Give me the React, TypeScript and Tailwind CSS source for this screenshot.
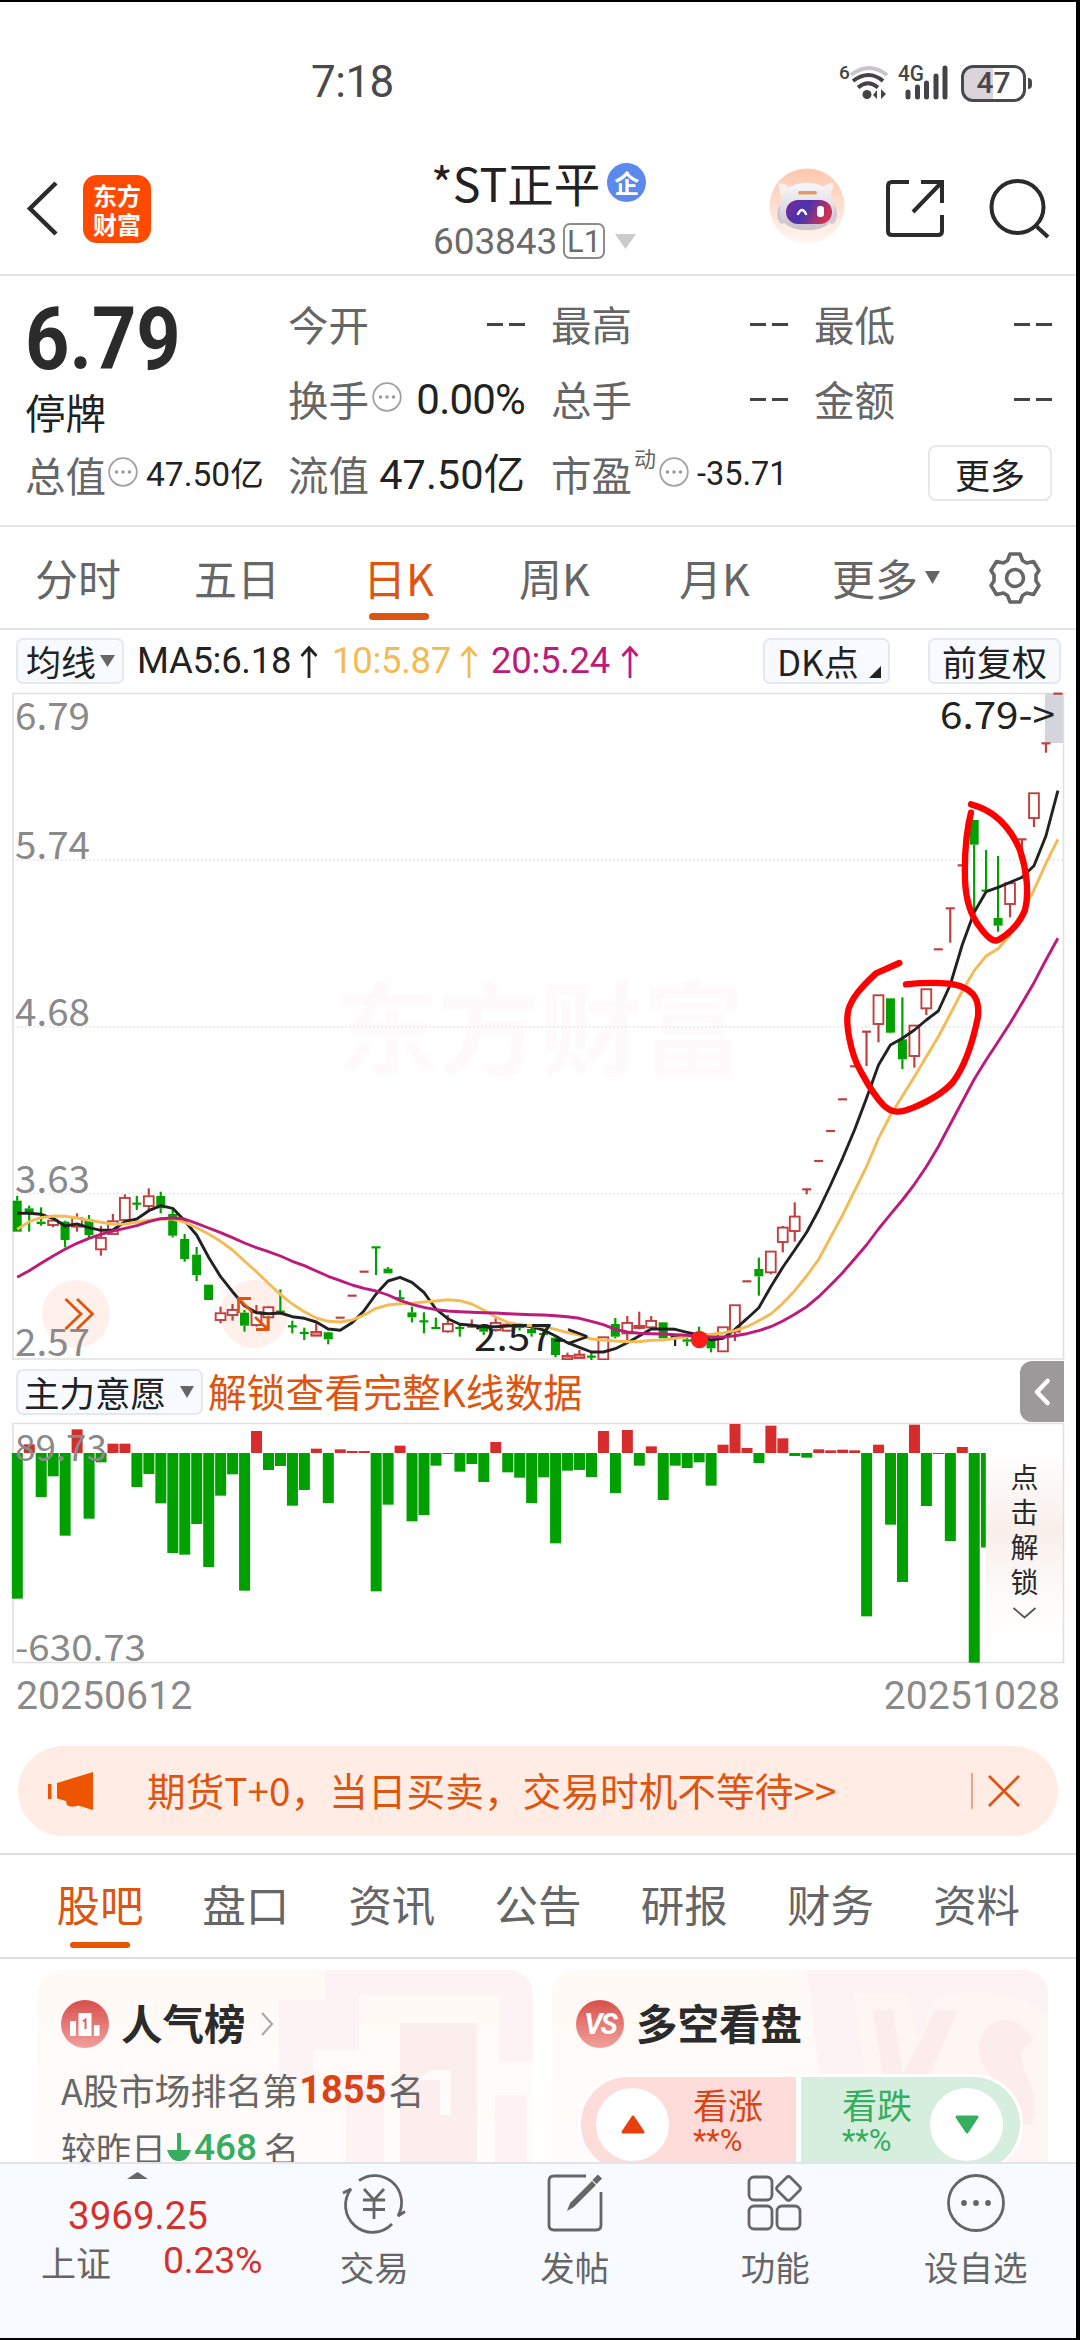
import React from "react";

const NUM = "font-['Roboto','Noto_Sans_CJK_SC',sans-serif]";

/* ---------- chart data: prices are stored in thirds of a pixel ---------- */

const cx = (i: number) => 17.2 + 11.962 * i;

type Kind = "r" | "g" | "k";
// [kind, high, bodyTop, bodyBottom, low]
type Candle = [Kind, number, number, number, number];

const shift = (list: Candle[], d: number): Candle[] =>
  list.map(([k, a, b, c, e]) => [k, a + d, b + d, c + d, e + d]);

const early: Candle[] = [
  ["g", 108, 122, 215, 215], ["g", 137, 145, 158, 215], ["g", 142, 185, 192, 197], ["r", 170, 180, 195, 202],
  ["g", 182, 185, 240, 262], ["r", 160, 172, 200, 215], ["g", 165, 178, 225, 235], ["r", 198, 232, 268, 287],
  ["r", 162, 182, 222, 222], ["r", 103, 112, 180, 180], ["g", 108, 131, 131, 150], ["r", 85, 107, 138, 150],
  ["g", 95, 108, 145, 160], ["g", 150, 162, 227, 232], ["g", 222, 237, 297, 305], ["g", 261, 284, 345, 363],
  ["g", 374, 374, 420, 420], ["r", 440, 458, 480, 490], ["r", 432, 448, 465, 482], ["g", 450, 458, 497, 515],
  ["r", 435, 455, 495, 500], ["r", 438, 440, 472, 510], ["g", 388, 455, 455, 460], ["g", 482, 499, 499, 520],
  ["g", 503, 519, 519, 540], ["r", 490, 514, 527, 528], ["g", 515, 517, 538, 553], ["r", 473, 473, 473, 473],
  ["r", 407, 407, 407, 407], ["r", 335, 335, 335, 335], ["g", 262, 262, 262, 345], ["g", 321, 326, 340, 340],
  ["g", 390, 415, 415, 420], ["g", 440, 457, 472, 487], ["g", 457, 484, 484, 520], ["g", 473, 504, 504, 506],
  ["r", 465, 490, 514, 518], ["g", 492, 504, 504, 530], ["r", 478, 500, 500, 503], ["g", 498, 500, 515, 525],
  ["r", 475, 487, 510, 515], ["r", 485, 492, 512, 515], ["g", 492, 501, 501, 512], ["g", 500, 507, 520, 530],
  ["g", 510, 522, 522, 530], ["g", 533, 533, 585, 592], ["r", 578, 586, 598, 598], ["r", 570, 582, 594, 594],
  ["g", 575, 590, 590, 600], ["r", 530, 530, 598, 598], ["g", 474, 492, 530, 535], ["r", 468, 487, 520, 540],
  ["r", 455, 496, 503, 508], ["r", 468, 481, 502, 505], ["g", 487, 487, 535, 535], ["k", 527, 531, 531, 558],
  ["g", 530, 538, 545, 558], ["g", 500, 520, 545, 550], ["g", 538, 540, 565, 577],
];
const climb: Candle[] = [
  ["r", 740, 740, 814, 814], ["r", 674, 674, 755, 783], ["r", 604, 604, 604, 604], ["g", 533, 567, 589, 647],
  ["r", 513, 513, 577, 583], ["r", 438, 441, 486, 517], ["r", 367, 408, 453, 485], ["r", 328, 328, 328, 343],
  ["r", 243, 243, 243, 243], ["r", 153, 153, 153, 153], ["r", 58, 58, 58, 58],
];
const late: Candle[] = [
  ["r", 1159, 1159, 1159, 1159], ["r", 1055, 1055, 1055, 1158], ["r", 944, 944, 1032, 1087],
  ["g", 955, 955, 1058, 1060], ["g", 952, 1078, 1138, 1167], ["r", 1035, 1035, 1128, 1163], ["r", 926, 926, 985, 1005],
  ["r", 808, 808, 808, 808], ["r", 685, 685, 685, 788], ["r", 556, 556, 556, 556], ["g", 420, 420, 494, 690],
  ["g", 510, 632, 632, 635], ["g", 528, 714, 737, 755], ["r", 608, 608, 672, 712], ["r", 478, 478, 478, 520],
  ["r", 338, 338, 414, 441], ["r", 190, 190, 190, 218], ["r", 41, 41, 41, 41],
];
const candles: Candle[] = [...shift(early, 3480), ...shift(climb, 3240), ...shift(late, 2040)];

const line = (a: number[], b: number[], c: number[]) =>
  [...a.map((v) => v + 3480), ...b.map((v) => v + 3240), ...c.map((v) => v + 2040)]
    .map((v, i) => `${cx(i).toFixed(1)},${(v / 3).toFixed(1)}`)
    .join(" ");

const ma5 = line(
  [160, 160, 163, 175, 198, 192, 203, 211, 210, 185, 177, 152, 137, 145, 182, 225, 292, 350, 395, 437, 458, 461, 459,
    470, 475, 486, 507, 511, 488, 452, 402, 363, 352, 367, 397, 447, 476, 493, 496, 500, 500, 498, 495, 500, 510, 528,
    548, 562, 576, 576, 566, 548, 528, 507, 507, 508, 517, 525, 540, 535],
  [748, 716, 683, 620, 562, 510, 457, 390, 315, 235],
  [1350, 1255, 1155, 1095, 1075, 1050, 1020, 993, 915, 795, 697, 635, 622, 607, 592, 557, 468, 332],
);
const ma10 = line(
  [208, 185, 173, 168, 169, 174, 181, 187, 193, 192, 187, 181, 177, 177, 187, 203, 222, 244, 270, 303, 335, 370, 403,
    432, 455, 474, 484, 486, 480, 465, 445, 435, 431, 430, 426, 423, 419, 422, 432, 450, 471, 487, 494, 497, 500, 508,
    518, 525, 537, 540, 543, 545, 545, 541, 540, 535, 530, 526, 523, 519],
  [752, 740, 722, 702, 670, 632, 588, 538, 472, 405],
  [1533, 1460, 1375, 1306, 1248, 1190, 1130, 1070, 1003, 933, 872, 828, 806, 765, 700, 630, 550, 478],
);
const ma20 = line(
  [352, 332, 310, 288, 268, 250, 235, 223, 213, 205, 197, 185, 176, 174, 177, 190, 204, 218, 233, 249, 263, 275, 288,
    304, 317, 333, 349, 362, 375, 385, 393, 405, 421, 433, 442, 449, 453, 455, 457, 458, 459, 461, 463, 464, 465, 467,
    470, 475, 484, 494, 508, 516, 520, 521, 522, 524, 526, 528, 531, 531],
  [767, 761, 752, 740, 723, 703, 680, 650, 615, 578],
  [1737, 1695, 1647, 1603, 1560, 1513, 1460, 1400, 1333, 1265, 1198, 1140, 1085, 1030, 970, 908, 840, 775],
);

const flow = [
  437, -26, 132, 70, 248, -71, 197, 28, -28, -28, 102, 63, 151, 300, 305, 213, 342, 128, 64, 413, -66, 51, 39, 158, 111,
  -13, 150, -11, -6, -6, 415, 155, -22, 205, 186, 38, 3, 56, 33, 87, -33, 58, 74, 150, 73, 271, 53, 51, 72, -66, 120,
  -69, 38, -20, 141, 38, 45, 28, 98, -25, -87, -15, 30, -82, -44, 9, 14, -11, -8, -10, -8, 490, -25, 215, 387, -85, 159,
  3, 264, -18, 629,
];

const RED = "#c0403f";
const GREEN = "#00a000";

function CandleMark({ c, i }: { c: Candle; i: number }) {
  const [k, hi, top, bot, lo] = c;
  const x = cx(i);
  const color = k === "r" ? RED : k === "g" ? GREEN : "#222";
  const t = top / 3;
  const b = bot / 3;
  const flat = bot - top < 4;
  const tiny = k === "r" && bot - top < 14;
  return (
    <g stroke={color} strokeWidth={2.2} fill="none">
      {hi < top && <path d={`M${x} ${hi / 3}V${t}`} />}
      {lo > bot && <path d={`M${x} ${b}V${lo / 3}`} />}
      {flat ? (
        <path d={`M${x - 4.5} ${t}h9`} />
      ) : k === "g" ? (
        <rect x={x - 4.5} y={t} width={9} height={b - t} fill={color} stroke="none" />
      ) : (
        <rect x={x - 4.9} y={t + 0.6} width={9.8} height={Math.max(b - t - 0.6, 2)} fill={tiny ? "#e58a8a" : "white"} strokeWidth={1.9} />
      )}
    </g>
  );
}

function ChartText({ x, y, w, children, fill = "#8a8a8a", size = 38 }: { x: number; y: number; w: number; children: string; fill?: string; size?: number }) {
  return (
    <text x={x} y={y} fontSize={size} fill={fill} textLength={w} lengthAdjust="spacingAndGlyphs" className="font-['Noto_Sans_CJK_SC',sans-serif]">
      {children}
    </text>
  );
}

function PriceChart() {
  return (
    <svg className="block h-[670px] w-[1076px]" viewBox="0 690 1076 670">
      <text x={336} y={1068} fontSize={102} fontWeight={700} fill="#fefafc" className="font-['Noto_Sans_CJK_SC',sans-serif]">东方财富</text>
      <g stroke="#dedede" strokeWidth={1.5} strokeDasharray="1.5 2.5">
        <path d="M13 860H1063M13 1027H1063M13 1193.5H1063" />
      </g>
      <path d="M13 693.5H1063.5V1359H13Z" fill="none" stroke="#e0e0e0" strokeWidth={1.6} />
      <rect x={1045} y={693} width={18} height={50} fill="#d4d4dd" />
      <circle cx={76} cy={1314} r={34} fill="#fff0ec" />
      <circle cx={254} cy={1314} r={34} fill="#fff0ec" />
      <ChartText x={15} y={730} w={75}>6.79</ChartText>
      <ChartText x={15} y={859} w={75}>5.74</ChartText>
      <ChartText x={15} y={1026} w={75}>4.68</ChartText>
      <ChartText x={15} y={1193} w={75}>3.63</ChartText>
      <ChartText x={15} y={1356} w={75}>2.57</ChartText>
      {candles.map((c, i) => <CandleMark key={i} c={c} i={i} />)}
      <g fill="none" strokeWidth={2.9} strokeLinejoin="round">
        <polyline points={ma5} stroke="#222" />
        <polyline points={ma10} stroke="#f3bb55" />
        <polyline points={ma20} stroke="#bd1a7a" />
      </g>
      <circle cx={699.5} cy={1339.5} r={8.7} fill="#fb1c1c" />
      <ChartText x={940} y={729} w={115} fill="#222">{"6.79->"}</ChartText>
      <ChartText x={474} y={1351} w={115} fill="#222">{"2.57->"}</ChartText>
      <g fill="none" stroke="#e0560f" strokeWidth={2.8}>
        <path d="M65.500 1299L81 1314L65.500 1329M77 1299L92.500 1314L77 1329" />
        <path d="M238.500 1313V1298.500H251M238.500 1298.500L252 1312M256 1329.500H268V1316M268 1329.500L255 1317" />
      </g>
      <g transform="translate(780 680) scale(.33333)" fill="none" stroke="#fe0000" strokeWidth={19} strokeLinecap="round" strokeLinejoin="round">
        <path d="M358 849L288 880C240 925 215 955 205 990C195 1030 212 1120 240 1170C262 1210 280 1245 310 1275C335 1300 360 1300 400 1283C450 1262 490 1240 520 1205C560 1150 580 1080 594 1010C598 960 585 935 540 918C500 905 440 907 378 913" />
        <path d="M573 373C640 390 690 440 720 510C740 570 748 640 735 690C715 740 680 765 655 780C640 787 625 775 600 742C570 705 557 650 555 600C553 520 557 460 573 398" />
      </g>
    </svg>
  );
}

function FlowChart() {
  return (
    <svg className="block h-[248px] w-[1076px]" viewBox="0 1420 1076 248">
      <defs>
        <linearGradient id="lock" x1="0" y1="0" x2="0" y2="1">
          <stop offset="0.1" stopColor="#ffffff" />
          <stop offset="0.45" stopColor="#f8efeb" />
          <stop offset="0.75" stopColor="#fefcfb" />
          <stop offset="1" stopColor="#ffffff" />
        </linearGradient>
      </defs>
      <rect x={986} y={1424} width={77} height={238} fill="url(#lock)" />
      <path d="M13 1423.500H1063.500V1662.500H13Z" fill="none" stroke="#e0e0e0" strokeWidth={1.6} />
      {flow.map((v, i) => (
        <rect key={i} x={cx(i) - 5.4} y={v < 0 ? 1453 + v / 3 : 1453} width={11} height={Math.abs(v) / 3} fill={v < 0 ? "#d62c2c" : GREEN} />
      ))}
      <rect x={981} y={1453} width={4.800} height={94.500} fill={GREEN} />
      <ChartText x={15} y={1461} w={92} size={36}>89.73</ChartText>
      <ChartText x={15} y={1661} w={131} size={36}>-630.73</ChartText>
      <g fontSize={28} fill="#2a2a2a" textAnchor="middle" className="font-['Noto_Sans_CJK_SC',sans-serif]">
        <text x={1024.500} y={1488}>点</text>
        <text x={1024.500} y={1523}>击</text>
        <text x={1024.500} y={1558}>解</text>
        <text x={1024.500} y={1593}>锁</text>
      </g>
      <path d="M1013.500 1608L1024.500 1617.500L1035.500 1608" fill="none" stroke="#555" strokeWidth={1.8} />
    </svg>
  );
}

/* ---------- small pieces ---------- */

function Dots() {
  return (
    <svg className="size-[30px] shrink-0" viewBox="0 0 30 30">
      <circle cx="15" cy="15" r="13.800" fill="none" stroke="#a2a2a2" strokeWidth="1.800" />
      <g fill="#999"><circle cx="8.500" cy="15" r="1.800" /><circle cx="15" cy="15" r="1.800" /><circle cx="21.500" cy="15" r="1.800" /></g>
    </svg>
  );
}

function Down({ className }: { className: string }) {
  return <svg className={className} viewBox="0 0 10 8" preserveAspectRatio="none"><path d="M0 0H10L5 8Z" fill="currentColor" /></svg>;
}

function StatusBar() {
  return (
    <div className="flex h-[156px] items-center pl-[311px] pt-[4px]">
      <span className={`${NUM} w-[528px] text-[44px] leading-none tracking-[-0.5px] text-[#4a4a4a]`}>7:18</span>
      <svg className="h-[40px] w-[50px]" viewBox="839 61 50 40">
        <text x="839" y="78" fontSize="19" fontWeight="500" fill="#444" className="font-['Roboto',sans-serif]">6</text>
        <g fill="none" strokeWidth="4">
          <path d="M851 74Q869 60 887 74" stroke="#c9c6cb" />
          <path d="M853 80Q869 68 883 80" stroke="#454347" />
          <path d="M858 86.500Q868 78 878 86.500" stroke="#454347" />
        </g>
        <circle cx="867" cy="93.500" r="4.500" fill="#454347" />
        <path d="M873 94L877 89V98ZM886 93L881 88V98Z" fill="#454347" />
      </svg>
      <svg className="ml-[8px] h-[40px] w-[54px]" viewBox="897 61 54 40">
        <text x="898" y="80" fontSize="22" fontWeight="500" fill="#444" textLength="26" lengthAdjust="spacingAndGlyphs" className="font-['Roboto',sans-serif]">4G</text>
        <path d="M908 91V96M917.500 86V96M926.500 82V96M936 75V96M945 67V96" stroke="#454347" strokeWidth="5" strokeLinecap="round" />
      </svg>
      <div className="ml-[10px] mt-[2px] flex h-[37px] w-[65px] items-center justify-center rounded-[12px] border-[3px] border-[#4a484c] bg-linear-to-r from-[#d9d5da] from-50% to-white to-50%">
        <span className={`${NUM} text-[30px] font-medium leading-none text-[#4a484c]`}>47</span>
      </div>
      <div className="ml-[2px] mt-[2px] h-[11px] w-[4px] rounded-r-full bg-[#4a484c]" />
    </div>
  );
}

function Robot() {
  return (
    <svg className="size-[76px]" viewBox="0 0 76 76">
      <defs>
        <linearGradient id="halo" x1="0" y1="0" x2="0" y2="1"><stop stopColor="#fdc7ad" /><stop offset="1" stopColor="#fff7f3" /></linearGradient>
        <linearGradient id="visor" x1="0" y1="0" x2="1" y2="0.300"><stop stopColor="#7a2a96" /><stop offset=".5" stopColor="#4a33b0" /><stop offset="1" stopColor="#cf3152" /></linearGradient>
        <linearGradient id="shell" x1="0" y1="0" x2="0" y2="1"><stop stopColor="#faf8fa" /><stop offset="1" stopColor="#c8c0ca" /></linearGradient>
      </defs>
      <circle cx="38" cy="38" r="37.500" fill="url(#halo)" />
      <path d="M12 28Q8 18 10 15Q17 15 22 21ZM60 28Q66 18 64 15Q57 15 52 21Z" fill="#f8efee" />
      <ellipse cx="13" cy="46" rx="5" ry="10" fill="#cfc8d2" />
      <ellipse cx="63" cy="46" rx="5" ry="10" fill="#cfc8d2" />
      <path d="M11 42C11 23 21 15 38 15S65 23 65 42C65 55 56 62 38 62S11 55 11 42Z" fill="url(#shell)" />
      <rect x="29" y="23" width="19" height="3.500" rx="1.700" fill="#e29b66" />
      <rect x="17" y="32" width="46" height="24" rx="12" fill="url(#visor)" />
      <path d="M29 46Q33 38 37 46" fill="none" stroke="#fff" strokeWidth="2.500" strokeLinecap="round" />
      <rect x="48" y="38" width="7" height="11" rx="3" fill="#fff" />
    </svg>
  );
}

function Header() {
  return (
    <header className="flex h-[118px] items-start border-b-2 border-[#e4e4e4]">
      <svg className="ml-[26px] mt-[22px] h-[56px] w-[33px]" viewBox="0 0 33 56"><path d="M30 3L4 28.500L30 54" fill="none" stroke="#2b2b2b" strokeWidth="4.500" /></svg>
      <div className="ml-[24px] mt-[17px] flex h-[68px] w-[68px] flex-col items-center justify-center rounded-[14px] bg-[#ff4a00] text-[24px] font-bold leading-[29px] text-white">
        <span>东方</span><span>财富</span>
      </div>
      <div className="ml-[280px] flex w-[338px] flex-col">
        <div className="flex h-[48px] items-center">
          <span className="whitespace-nowrap text-[46.500px] leading-[48px] text-[#222]">*ST正平</span>
          <span className="ml-[7px] flex size-[39px] items-center justify-center rounded-full bg-[#5b8aec] text-[25px] font-bold leading-none text-white">企</span>
        </div>
        <div className="mt-[16px] flex h-[38px] items-center pl-[2px]">
          <span className={`${NUM} text-[37px] leading-none tracking-[-0.100px] text-[#6b6b6b]`}>603843</span>
          <span className={`${NUM} ml-[6px] flex h-[36px] w-[42px] items-center justify-center rounded-[7px] border-2 border-[#8b8b8b] text-[31px] leading-none text-[#6b6b6b]`}>L1</span>
          <Down className="ml-[10px] h-[15px] w-[21px] text-[#cbcbcb]" />
        </div>
      </div>
      <div className="mt-[10px]"><Robot /></div>
      <svg className="ml-[40px] mt-[21px] size-[60px]" viewBox="0 0 60 60" fill="none" stroke="#2b2b2b" strokeWidth="4">
        <path d="M24 3H7Q3 3 3 7V52Q3 56 7 56H53Q57 56 57 52V36M36 3H57V24M57 3L28 33" />
      </svg>
      <svg className="ml-[44px] mt-[21px] size-[61px]" viewBox="0 0 61 61" fill="none" stroke="#2b2b2b" strokeWidth="4">
        <circle cx="28.500" cy="28" r="26" /><path d="M46 46L59 58" />
      </svg>
    </header>
  );
}

function Dash() {
  return <span className="flex gap-[6px]"><i className="h-[3.500px] w-[16px] bg-[#444]" /><i className="h-[3.500px] w-[16px] bg-[#444]" /></span>;
}

function Quote() {
  const label = "text-[40.500px] leading-none text-[#666] whitespace-nowrap";
  const big = `${NUM} text-[41.500px] leading-none text-[#222] whitespace-nowrap`;
  return (
    <section className="flex h-[251px] border-b-2 border-[#e4e4e4] pl-[25px] text-[#222]">
      <div className="flex w-[263px] flex-col">
        <span className={`${NUM} mt-[20px] h-[84px] origin-left scale-x-[0.880] text-[88px] font-bold leading-[86px] text-[#2b2b2b]`}>6.79</span>
        <span className="mt-[9px] text-[40.500px] leading-[46px]">停牌</span>
        <div className="mt-[18px] flex h-[44px] items-center">
          <span className={label}>总值</span><span className="ml-[2px] mt-[-6px] flex"><Dots /></span>
          <span className={`${NUM} ml-[8px] whitespace-nowrap text-[33.500px] leading-none`}>47.50亿</span>
        </div>
      </div>
      <div className="mt-[11px] grid h-[225px] grid-cols-[237px_237px_238px] grid-rows-3 gap-x-[26px]">
        <div className="flex items-center justify-between"><span className={label}>今开</span><Dash /></div>
        <div className="flex items-center justify-between"><span className={label}>最高</span><Dash /></div>
        <div className="flex items-center justify-between"><span className={label}>最低</span><Dash /></div>
        <div className="flex items-center justify-between"><span className="flex items-center"><span className={label}>换手</span><span className="mt-[-6px] ml-[3px] flex"><Dots /></span></span><span className={`${NUM} whitespace-nowrap text-[42px] leading-none tracking-[-0.800px]`}>0.00%</span></div>
        <div className="flex items-center justify-between"><span className={label}>总手</span><Dash /></div>
        <div className="flex items-center justify-between"><span className={label}>金额</span><Dash /></div>
        <div className="flex items-center justify-between"><span className={label}>流值</span><span className={big}>47.50亿</span></div>
        <div className="flex items-center"><span className={label}>市盈</span><span className="mb-[36px] ml-[2px] text-[22px] leading-none text-[#666]">动</span><span className="mt-[-6px] ml-[3px] flex"><Dots /></span><span className={`${NUM} ml-[8px] text-[32.500px] leading-none`}>-35.71</span></div>
        <div className="flex items-center justify-end"><span className="mt-[-3px] flex h-[56px] w-[124px] items-center justify-center rounded-[8px] border-2 border-[#e8e8e8] text-[35px] leading-none">更多</span></div>
      </div>
    </section>
  );
}

function PeriodTabs() {
  const items: [string, string][] = [["分时", "w-[159px]"], ["五日", "w-[170px]"], ["日K", "w-[155px]"], ["周K", "w-[160px]"], ["月K", "w-[153px]"], ["更多", "w-[93px]"]];
  return (
    <nav className="flex h-[103px] items-start border-b-2 border-[#e4e4e4] pl-[35px] text-[43px] leading-[50px] text-[#666]">
      {items.map(([t, w]) => (
        <div key={t} className={`${w} mt-[25px] whitespace-nowrap`}>
          {t === "日K" ? (
            <span className="flex w-[69px] flex-col items-center text-[#dd5510]"><span>日K</span><i className="mt-[11px] h-[7px] w-[60px] rounded-full bg-[#dd5510]" /></span>
          ) : t}
        </div>
      ))}
      <Down className="mt-[44px] h-[13px] w-[15px]" />
      <svg className="ml-[48px] mt-[24px] size-[54px]" viewBox="0 0 54 54" fill="none" stroke="#666" strokeWidth="3.600" strokeLinejoin="round">
        <path d="M22 3H32L34.500 9.500L38.500 12L45.500 10.500L51 19.500L48 24V30L51 34.500L45.500 43.500L38.500 42L34.500 44.500L32 51H22L19.500 44.500L15.500 42L8.500 43.500L3 34.500L6 30V24L3 19.500L8.500 10.500L15.500 12L19.500 9.500Z" />
        <circle cx="27" cy="27" r="8.500" />
      </svg>
    </nav>
  );
}

function Up() {
  return <svg className="h-[33px] w-[18px]" viewBox="0 0 18 33" fill="none" stroke="currentColor" strokeWidth="2.800"><path d="M9 33V2M1.500 11L9 2.500L16.500 11" /></svg>;
}

function Indicators() {
  const btn = "flex h-[46px] items-center rounded-[7px] border-2 border-[#e4e8f0] bg-[#f7faff] text-[35px] leading-[42px] text-[#222] whitespace-nowrap";
  const val = `${NUM} text-[36.500px] leading-none tracking-[-0.3px] whitespace-nowrap`;
  return (
    <div className="flex h-[60px] items-center pl-[16px] pt-[2px]">
      <span className={`${btn} w-[108px] pl-[8px]`}>均线<Down className="ml-[4px] h-[12px] w-[15px] text-[#666]" /></span>
      <div className="ml-[13px] flex w-[195px] items-center gap-[9px] text-[#222]"><span className={val}>MA5:6.18</span><Up /></div>
      <div className="flex w-[159px] items-center gap-[9px] text-[#f3bb55]"><span className={val}>10:5.87</span><Up /></div>
      <div className="flex w-[272px] items-center gap-[11px] text-[#bd1a7a]"><span className={val}>20:5.24</span><Up /></div>
      <span className={`${btn} w-[127px] pl-[12px]`}>DK点<svg className="ml-[10px] mt-[22px] h-[12px] w-[12px]" viewBox="0 0 12 12"><path d="M12 0V12H0Z" fill="#222" /></svg></span>
      <span className={`${btn} ml-[38px] w-[133px] justify-center`}>前复权</span>
    </div>
  );
}

function SubHeader() {
  return (
    <div className="flex h-[60px] items-start pl-[16px]">
      <span className="mt-[9px] flex h-[46px] w-[187px] items-center whitespace-nowrap rounded-[7px] border-2 border-[#e4e8f0] bg-[#f7faff] pl-[6px] text-[35.500px] leading-[42px] text-[#222]">主力意愿<Down className="ml-[14px] h-[12px] w-[14px] text-[#666]" /></span>
      <span className="ml-[5px] mt-[7px] w-[812px] whitespace-nowrap text-[38.800px] leading-[46px] text-[#dd5510]">解锁查看完整K线数据</span>
      <span className="relative z-10 mt-[1px] flex h-[61px] w-[44px] items-center justify-center rounded-l-[12px] bg-[#9c999b]">
        <svg className="h-[28px] w-[16px]" viewBox="0 0 16 28"><path d="M13.500 3L3 14L13.500 25" fill="none" stroke="#fff" strokeWidth="4.500" strokeLinecap="round" strokeLinejoin="round" /></svg>
      </span>
    </div>
  );
}

function Banner() {
  return (
    <div className="ml-[18px] flex h-[90px] w-[1040px] items-center rounded-full bg-[#ffede5] text-[#dd5510]">
      <svg className="ml-[29px] h-[40px] w-[48px] shrink-0" viewBox="0 0 48 40" fill="#ee5500"><path d="M1 13H4.500V28H1ZM10 12L46 1V39L31 34.500Q25 37 20 34L19 30L10 27.500Z" /></svg>
      <span className="mb-[4px] ml-[52px] w-[824px] shrink-0 whitespace-nowrap text-[38.700px] leading-none">期货T+0，当日买卖，交易时机不等待&gt;&gt;</span>
      <i className="h-[36px] w-[2px] bg-[#eba582]" />
      <svg className="ml-[14px] size-[34px] shrink-0" viewBox="0 0 34 34"><path d="M2 2L32 32M32 2L2 32" stroke="#dd5510" strokeWidth="2.800" /></svg>
    </div>
  );
}

function SectionTabs() {
  return (
    <nav className="mt-[17px] flex h-[106px] border-y-2 border-[#dedede] pl-[56px] text-[43.500px] leading-[50px] text-[#666]">
      {["股吧", "盘口", "资讯", "公告", "研报", "财务", "资料"].map((t, i) => (
        <div key={t} className="w-[146.200px] shrink-0 pt-[24px]">
          {i === 0 ? (
            <span className="flex w-[88px] flex-col items-center text-[#dd5510]"><span>{t}</span><i className="mt-[13px] h-[6px] w-[60px] rounded-full bg-[#e85500]" /></span>
          ) : t}
        </div>
      ))}
    </nav>
  );
}

function Cards() {
  return (
    <div className="flex h-[203px] gap-[19px] overflow-hidden pl-[37px] pt-[11px]">
      <div className="relative h-[240px] w-[496px] overflow-hidden rounded-[24px] bg-linear-to-b from-[#fffaf5] to-[#fffcfd] pl-[24px]">
        <svg className="absolute left-0 top-0 h-[200px] w-[496px]" viewBox="37 1970 496 200">
          <path d="M325 1970H533V2062H499V1995H359V2050H313V2080H279V2000H325Z" fill="#fdf3f4" />
          <path d="M400 2023H477V2170H418V2080H440V2115H451V2070H430L418 2080V2170H400Z" fill="#fdeeee" />
          <path d="M346 2072H384V2170H346ZM495 2095H527V2170H495Z" fill="#fef2f3" />
        </svg>
        <div className="relative flex h-[108px] items-center">
          <svg className="size-[48px]" viewBox="0 0 48 48">
            <defs><linearGradient id="badge" x1="0" y1="0" x2="0" y2="1"><stop stopColor="#d84f4c" /><stop offset="1" stopColor="#f0a09c" /></linearGradient></defs>
            <circle cx="24" cy="24" r="24" fill="url(#badge)" />
            <path d="M9 21H15V36H9ZM17.500 13H30.500V36H17.500ZM33 25H38.500V36H33Z" fill="#fff" />
            <path d="M22 21.500L24.500 19.500V29" fill="none" stroke="#dc6360" strokeWidth="2" />
          </svg>
          <span className="mb-[3px] ml-[12px] text-[41.500px] font-bold leading-none text-[#2b2b2b]">人气榜</span>
          <svg className="ml-[14px] h-[24px] w-[14px]" viewBox="0 0 14 24"><path d="M2 1L12 12L2 23" fill="none" stroke="#aaa" strokeWidth="2.200" /></svg>
        </div>
        <div className="relative mt-[-11px] flex h-[46px] items-center whitespace-nowrap text-[35.900px] leading-none text-[#666]">A股市场排名第<b className={`${NUM} ml-[1px] text-[38px] text-[#da4415]`}>1855</b><span className="ml-[2px]">名</span></div>
        <div className="relative mt-[11px] flex h-[46px] items-center whitespace-nowrap text-[35px] leading-none text-[#666]">较昨日
          <svg className="ml-[1px] h-[30px] w-[24px]" viewBox="0 0 24 30"><path d="M10 1H14V18H24Q20 29 14 29H10Q4 29 0 18H10Z" fill="#36ad5f" /></svg>
          <b className={`${NUM} ml-[3px] text-[37px] font-medium text-[#36ad5f]`}>468</b><span className="ml-[7px]">名</span>
        </div>
      </div>
      <div className="relative h-[240px] w-[496px] overflow-hidden rounded-[24px] bg-linear-to-b from-[#fffaf5] to-[#fffcfd] pl-[24px]">
        <svg className="absolute left-0 top-0 h-[200px] w-[496px]" viewBox="552 1970 496 200">
          <path d="M807 1970H1048V2170H830Z" fill="#fdf2f4" />
          <path d="M853 1993H908L918 2040L935 1998Q1000 1980 1048 2015V2170H880Z" fill="#fff6f3" />
          <path d="M873 2010H893L903 2075L935 2010H958L915 2110H888ZM1034 2040Q1010 2005 985 2030C960 2070 1020 2085 1010 2125H1032C1045 2075 1000 2060 1034 2040Z" fill="#fdecec" />
        </svg>
        <div className="relative flex h-[108px] items-center">
          <span className={`${NUM} flex size-[48px] items-center justify-center rounded-full bg-linear-to-b from-[#d84f4c] to-[#f0a09c] text-[29px] font-bold italic leading-none tracking-[-2px] text-white`}>VS</span>
          <span className="mb-[3px] ml-[12px] text-[41.500px] font-bold leading-none text-[#2b2b2b]">多空看盘</span>
        </div>
        <div className="relative mt-[-4px] ml-[2px] flex h-[100px] w-[445px] rounded-full border-[3px] border-white bg-linear-to-r from-[#fddcd9] from-50% to-[#d6eedd] to-50%">
          <div className="flex w-[220px] items-center border-r-[5px] border-white pl-[15px]">
            <span className="flex size-[73px] items-center justify-center rounded-full bg-white"><svg className="h-[19px] w-[24px]" viewBox="0 0 24 19"><path d="M12 2L22 17H2Z" fill="#e7400f" stroke="#e7400f" strokeWidth="3" strokeLinejoin="round" /></svg></span>
            <span className="ml-[24px] mt-[-6px] flex flex-col text-[35px] leading-[40px] text-[#da4415]"><span>看涨</span><span className={`${NUM} text-[31px] leading-[34px]`}>**%</span></span>
          </div>
          <div className="flex flex-1 items-center pl-[41px]">
            <span className="mt-[-6px] flex w-[88px] flex-col text-[35px] leading-[40px] text-[#36ad5f]"><span>看跌</span><span className={`${NUM} text-[31px] leading-[34px]`}>**%</span></span>
            <span className="flex size-[73px] items-center justify-center rounded-full bg-white"><svg className="h-[19px] w-[24px]" viewBox="0 0 24 19"><path d="M12 17L22 2H2Z" fill="#36ad5f" stroke="#36ad5f" strokeWidth="3" strokeLinejoin="round" /></svg></span>
          </div>
        </div>
      </div>
    </div>
  );
}

function NavItem({ label, children }: { label: string; children: React.ReactNode }) {
  return (
    <div className="flex w-[200.600px] flex-col items-center">
      <svg className="mt-[9px] size-[60px] overflow-visible" viewBox="0 0 60 60" fill="none" stroke="#666" strokeWidth="2.800">{children}</svg>
      <span className="mt-[11px] whitespace-nowrap text-[34.500px] leading-[44px] text-[#666]">{label}</span>
    </div>
  );
}

function BottomBar() {
  return (
    <footer className="flex h-[176px] border-t-2 border-[#e2e4ea] bg-[#f7faff]">
      <div className="flex w-[274px] flex-col">
        <svg className="ml-[127px] mt-[8px] h-[7px] w-[21px]" viewBox="0 0 21 7"><path d="M0 7L10.500 0L21 7Z" fill="#666" /></svg>
        <span className={`${NUM} ml-[68px] mt-[14px] text-[38.500px] leading-[46px] text-[#d6302c]`}>3969.25</span>
        <div className="flex h-[44px] items-center"><span className="ml-[41px] text-[35px] leading-none text-[#666]">上证</span><span className={`${NUM} ml-[52px] text-[37.500px] leading-none tracking-[-0.3px] text-[#d6302c]`}>0.23%</span></div>
      </div>
      <NavItem label="交易">
        <path d="M15 7.500A27 27 0 0 1 54 43L61 38.500M48 51A27 27 0 0 1 7 16L-1 20" />
        <path d="M20 16L30 27L40 16M30 27V46M19 27H41M19 36.500H41" />
      </NavItem>
      <NavItem label="发帖">
        <path d="M41 3H9Q4 3 4 8V52Q4 57 9 57H51Q56 57 56 52V19" />
        <path d="M22 38L25 30L47 8L51 12L29 34Z" fill="#666" stroke="none" /><path d="M49.500 9L55 3.500" strokeWidth="6" />
      </NavItem>
      <NavItem label="功能">
        <rect x="4" y="4" width="23" height="23" rx="5" /><rect x="4" y="33" width="23" height="23" rx="5" /><rect x="32" y="33" width="23" height="23" rx="5" />
        <path d="M41.500 4.500Q43.500 2.500 45.500 4.500L54.500 13.500Q56.500 15.500 54.500 17.500L45.500 26.500Q43.500 28.500 41.500 26.500L32.500 17.500Q30.500 15.500 32.500 13.500Z" />
      </NavItem>
      <NavItem label="设自选">
        <circle cx="30" cy="30" r="27.500" />
        <g fill="#666" stroke="none"><circle cx="18" cy="30" r="2.900" /><circle cx="30" cy="30" r="2.900" /><circle cx="42" cy="30" r="2.900" /></g>
      </NavItem>
    </footer>
  );
}

export default function App() {
  return (
    <div className="h-[2340px] w-[1080px] overflow-hidden border-y-2 border-r-4 border-black bg-white font-['Noto_Sans_CJK_SC',sans-serif]">
      <StatusBar />
      <Header />
      <Quote />
      <PeriodTabs />
      <Indicators />
      <PriceChart />
      <SubHeader />
      <FlowChart />
      <div className={`${NUM} flex h-[78px] items-start justify-between pl-[16px] pr-[16px] pt-[6px] text-[39.200px] leading-[44px] text-[#8a8a8a]`}><span>20250612</span><span>20251028</span></div>
      <Banner />
      <SectionTabs />
      <Cards />
      <BottomBar />
    </div>
  );
}
